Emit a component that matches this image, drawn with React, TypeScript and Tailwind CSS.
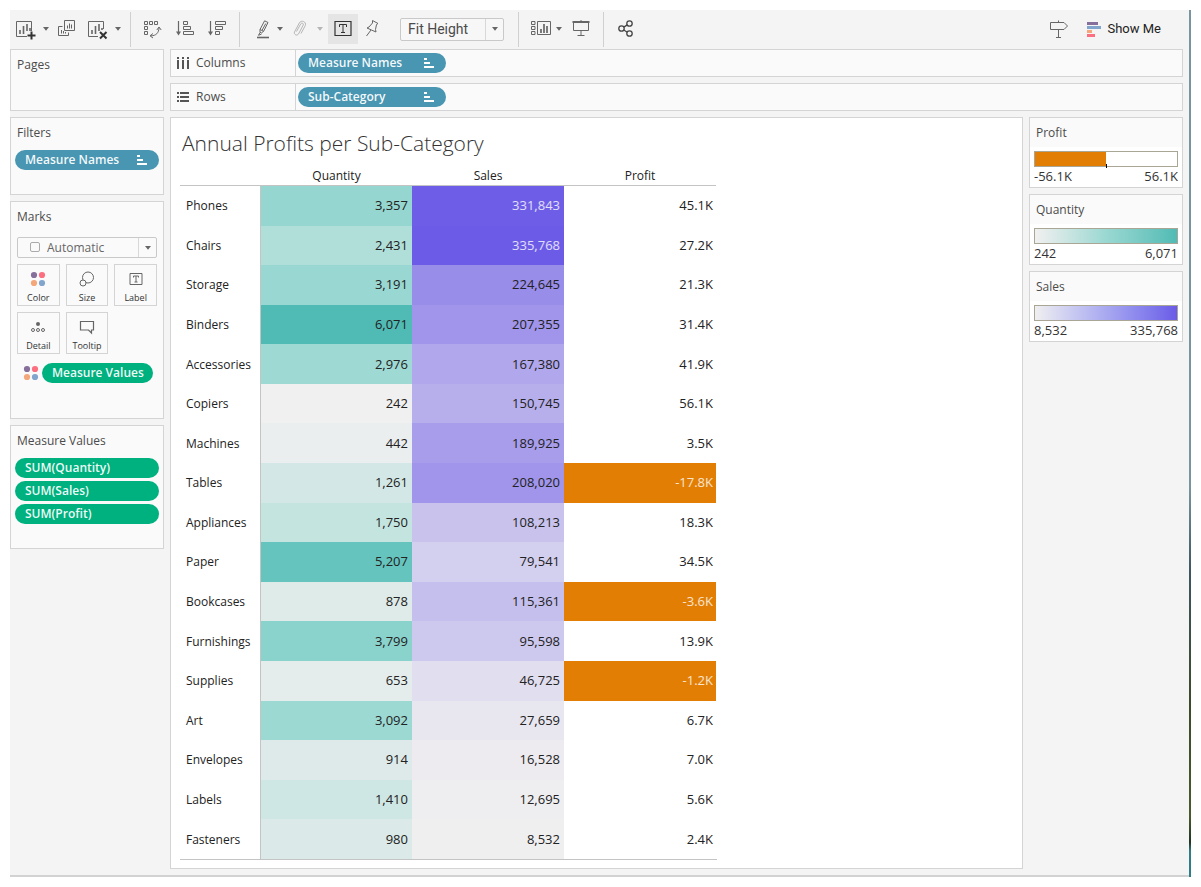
import type { ReactNode } from "react";
import clsx from "clsx";

interface Row {
    name: string;
    quantity: number;
    sales: number;
    profit: number;
}

const rows: Row[] = [
    { name: "Phones", quantity: 3357, sales: 331843, profit: 45.1 },
    { name: "Chairs", quantity: 2431, sales: 335768, profit: 27.2 },
    { name: "Storage", quantity: 3191, sales: 224645, profit: 21.3 },
    { name: "Binders", quantity: 6071, sales: 207355, profit: 31.4 },
    { name: "Accessories", quantity: 2976, sales: 167380, profit: 41.9 },
    { name: "Copiers", quantity: 242, sales: 150745, profit: 56.1 },
    { name: "Machines", quantity: 442, sales: 189925, profit: 3.5 },
    { name: "Tables", quantity: 1261, sales: 208020, profit: -17.8 },
    { name: "Appliances", quantity: 1750, sales: 108213, profit: 18.3 },
    { name: "Paper", quantity: 5207, sales: 79541, profit: 34.5 },
    { name: "Bookcases", quantity: 878, sales: 115361, profit: -3.6 },
    { name: "Furnishings", quantity: 3799, sales: 95598, profit: 13.9 },
    { name: "Supplies", quantity: 653, sales: 46725, profit: -1.2 },
    { name: "Art", quantity: 3092, sales: 27659, profit: 6.7 },
    { name: "Envelopes", quantity: 914, sales: 16528, profit: 7.0 },
    { name: "Labels", quantity: 1410, sales: 12695, profit: 5.6 },
    { name: "Fasteners", quantity: 980, sales: 8532, profit: 2.4 },
];

type Rgb = [number, number, number];

const quantityStops: Rgb[] = [[241, 240, 240], [154, 216, 210], [80, 187, 181]];
const salesStops: Rgb[] = [[240, 239, 240], [108, 91, 231]];

function scaleColor(value: number, min: number, max: number, stops: Rgb[]): string {
    const t = ((value - min) / (max - min)) * (stops.length - 1);
    const i = Math.min(Math.floor(t), stops.length - 2);
    const mix = stops[i].map((c, k) => Math.round(c + (stops[i + 1][k] - c) * (t - i)));
    return `rgb(${mix.join(", ")})`;
}

function Caret() {
    return (
        <svg viewBox="0 0 8 4" className="h-1 w-2 shrink-0" aria-hidden="true">
            <path d="M1 0h6L4 3.7z" fill="currentColor" />
        </svg>
    );
}

function ColorDots() {
    return (
        <svg viewBox="0 0 16 16" className="size-4 shrink-0" aria-hidden="true">
            <circle cx="4" cy="4" r="3.1" fill="#866f9b" />
            <circle cx="12" cy="4" r="3.1" fill="#fc6f80" />
            <circle cx="4" cy="12" r="3.1" fill="#f4a77b" />
            <circle cx="12" cy="12" r="3.1" fill="#82a5cd" />
        </svg>
    );
}

function ToolButton({ label, className, children }: Readonly<{ label: string; className?: string; children: ReactNode }>) {
    return (
        <button type="button" aria-label={label} className={clsx("flex h-[30px] shrink-0 items-center justify-center", className)}>
            {children}
        </button>
    );
}

function Icon({ small, children }: Readonly<{ small?: boolean; children: ReactNode }>) {
    return (
        <svg
            viewBox={small ? "0 0 16 20" : "0 0 20 20"}
            className={clsx("h-5 shrink-0 overflow-visible", small ? "w-4" : "w-5")}
            fill="none"
            stroke="currentColor"
            aria-hidden="true"
        >
            {children}
        </svg>
    );
}

function Separator({ className }: Readonly<{ className?: string }>) {
    return <div className={clsx("h-[35px] w-px shrink-0 bg-[#d0d0d0]", className)} />;
}

function Toolbar() {
    return (
        <header className="flex h-[39px] items-center pr-7 pb-px pl-[6px] text-[#666]">
            <ToolButton label="New Worksheet">
                <Icon>
                    <path d="M11 17.5H0.5v-15h15V12" />
                    <path d="M4 11v4M7.5 7v8M11 5v7M14 9v3" strokeWidth="1.6" />
                    <path d="M15.5 12.5v8M11.5 16.5h8" stroke="#333" strokeWidth="2" />
                </Icon>
            </ToolButton>
            <ToolButton label="New Worksheet options" className="ml-[6px]"><Caret /></ToolButton>
            <ToolButton label="Duplicate" className="ml-2">
                <Icon>
                    <path d="M6.5 1.5h10v10h-10zM4.5 7.5h-4v9h10v-3" />
                    <path d="M9.5 6.5v3M11.5 4.5v5M13.5 5.5v4M3.5 11v3.5M5.5 12v2.5M7.5 13v1.5" />
                </Icon>
            </ToolButton>
            <ToolButton label="Clear Sheet" className="ml-[10px]">
                <Icon>
                    <path d="M10 17.5H0.5v-15h15V10" />
                    <path d="M4 11v4M7.5 7v8M11 5v7" strokeWidth="1.6" />
                    <path d="M14 9v2" strokeWidth="1.6" />
                    <path d="M12 13l6.5 6.5M18.5 13L12 19.5" stroke="#333" strokeWidth="2" />
                </Icon>
            </ToolButton>
            <ToolButton label="Clear options" className="ml-[6px]"><Caret /></ToolButton>
            <Separator className="ml-2" />
            <ToolButton label="Swap Rows and Columns" className="ml-3">
                <Icon>
                    <path d="M1.5 2.5h3v3h-3zM6.5 2.5h3v3h-3zM11.5 2.5h3v3h-3zM1.5 7.5h3v3h-3zM1.5 12.5h3v3h-3z" />
                    <path d="M8 16.8c5 0 7.8-3 8-7.8" />
                    <path d="M13.8 11l2.2-3 2.2 3M10 14.5l-3 2.3 3 2.2" />
                </Icon>
            </ToolButton>
            <ToolButton label="Sort Ascending" className="ml-3">
                <Icon>
                    <path d="M3.5 2v12" strokeWidth="1.2" />
                    <path d="M1 12.5h5L3.5 16.5z" fill="currentColor" stroke="none" />
                    <path d="M8.5 2.5h4v3h-4zM8.5 7.5h7v3h-7zM8.5 12.5h10v3h-10z" />
                </Icon>
            </ToolButton>
            <ToolButton label="Sort Descending" className="ml-3">
                <Icon>
                    <path d="M3.5 2v12" strokeWidth="1.2" />
                    <path d="M1 12.5h5L3.5 16.5z" fill="currentColor" stroke="none" />
                    <path d="M8.5 2.5h10v3h-10zM8.5 7.5h7v3h-7zM8.5 12.5h4v3h-4z" />
                </Icon>
            </ToolButton>
            <Separator className="ml-3" />
            <ToolButton label="Highlight" className="ml-4">
                <Icon small>
                    <path d="M4 10.5L8.6 1.8l3.4 1.7-4.4 8.8zM4 10.5v2.8l1.3.7 2.3-1.7M4 13.5l-1.5 2.8 3-1.2M9.8 4.5l-3.6 6.5" />
                    <path d="M1 18.5h12" strokeWidth="1.6" />
                </Icon>
            </ToolButton>
            <ToolButton label="Highlight options" className="ml-1"><Caret /></ToolButton>
            <ToolButton label="Group Members" className="ml-2 text-[#b5b5b5]">
                <Icon small>
                    <path d="M4.5 12.5L8.8 4.8c1-1.5 3.2-.4 2.4 1.3L6.5 15c-1.4 2.2-5 .6-4-2L7.3 4c2-3.5 7.4-1.3 6 2.5L9 14.5" />
                </Icon>
            </ToolButton>
            <ToolButton label="Group options" className="ml-2 text-[#b5b5b5]"><Caret /></ToolButton>
            <ToolButton label="Show Mark Labels" className="ml-1 w-[30px] bg-[#e5e5e5] text-[#333]">
                <Icon>
                    <path d="M2 2.5h16v14H2z" strokeWidth="1.2" />
                    <path d="M6.5 8V5.5h7V8M10 5.5v8M8 13.5h4" />
                </Icon>
            </ToolButton>
            <ToolButton label="Fix Axes" className="ml-[6px]">
                <Icon small>
                    <path d="M8.5 1.5l5.5 3-1.5 1-1 5 .5 2.5-4.500-2-4.500-2 2-1 3.500-4zM7 11l-4.500 6" />
                </Icon>
            </ToolButton>
            <div className="relative ml-5 h-[23px] w-[104px] shrink-0 rounded-xs border border-[#c9c9c9] bg-[#f7f7f7]">
                <select aria-label="Fit" className="block h-full w-full appearance-none pl-[7px] font-['Roboto',sans-serif] text-sm leading-5 text-[#4b4b4b]">
                    <option>Fit Height</option>
                    <option>Fit Width</option>
                    <option>Entire View</option>
                </select>
                <span className="pointer-events-none absolute inset-y-0 right-0 flex w-[18px] items-center justify-center border-l border-[#d8d8d8]">
                    <Caret />
                </span>
            </div>
            <Separator className="ml-[14px]" />
            <ToolButton label="Show Cards" className="ml-3">
                <Icon>
                    <path d="M0.5 2.5H4v3H0.5zM0.5 7.5H4v3H0.5zM0.5 12.5H4v3H0.5zM6.5 2.5h13v13h-13z" />
                    <path d="M10 10v4M13 5v9M16 7v7" strokeWidth="1.7" />
                </Icon>
            </ToolButton>
            <ToolButton label="Cards options" className="ml-1"><Caret /></ToolButton>
            <ToolButton label="Presentation Mode" className="ml-2">
                <Icon>
                    <path d="M1.5 3h17" strokeWidth="2" />
                    <path d="M2.5 4v7.5h15V4M10 11.5v5M6.5 16.5h7M10 1v2" />
                </Icon>
            </ToolButton>
            <Separator className="ml-3" />
            <ToolButton label="Share" className="ml-3 text-[#444]">
                <Icon>
                    <circle cx="5.5" cy="9.5" r="2.7" strokeWidth="1.3" />
                    <circle cx="13.5" cy="4.5" r="2.7" strokeWidth="1.3" />
                    <circle cx="13.5" cy="14.5" r="2.7" strokeWidth="1.3" />
                    <path d="M7.8 8.1l3.5-2.2M7.8 11l3.5 2.2" strokeWidth="1.3" />
                </Icon>
            </ToolButton>
            <ToolButton label="Guide" className="ml-auto">
                <Icon>
                    <path d="M1.5 3.5H15l3.5 3.500-3.500 3.500H1.5zM9.5 1.5v2M9.5 10.5v8M7 18.5h5" />
                </Icon>
            </ToolButton>
            <button type="button" className="ml-[18px] flex shrink-0 items-center gap-[6px] font-['Roboto',sans-serif] text-[13px] leading-5 text-[#222]">
                <svg viewBox="0 0 14 16" className="h-4 w-3.5" aria-hidden="true">
                    <path d="M0 1h11v3H0z" fill="#866f9b" />
                    <path d="M0 5h14v3H0z" fill="#82a5cd" />
                    <path d="M0 9h5v3H0z" fill="#f4a77b" />
                    <path d="M0 13h8v3H0z" fill="#fc6f80" />
                </svg>
                Show Me
            </button>
        </header>
    );
}

function Pill({ label, green, sorted, className }: Readonly<{ label: string; green?: boolean; sorted?: boolean; className?: string }>) {
    return (
        <button
            type="button"
            className={clsx(
                "flex h-5 items-center justify-between rounded-full pl-[10px] text-xs leading-5 font-semibold whitespace-nowrap text-white/95",
                green ? "bg-[#00b180] pr-1" : "bg-[#4996b2] pr-3",
                className
            )}
        >
            {label}
            {sorted && (
                <svg viewBox="0 0 10 10" className="size-[10px]" aria-hidden="true">
                    <path d="M0 0h3v2H0zM0 4h6v2H0zM0 8h10v2H0z" fill="#fff" />
                </svg>
            )}
        </button>
    );
}

function Card({ title, className, children }: Readonly<{ title: string; className?: string; children?: ReactNode }>) {
    return (
        <section className={clsx("border border-[#d4d4d4] bg-[#fafafa] px-1", className)}>
            <h2 className="h-8 px-0.5 text-xs leading-[30px] text-[#4b4b4b]">{title}</h2>
            {children}
        </section>
    );
}

function MarkButton({ label, children }: Readonly<{ label: string; children: ReactNode }>) {
    return (
        <button
            type="button"
            className="flex h-[42px] flex-col items-center border border-[#d4d4d4] pt-[6px] text-[9px] leading-[22px] text-[#333]"
        >
            {children}
            {label}
        </button>
    );
}

function MarkIcon({ children }: Readonly<{ children: ReactNode }>) {
    return (
        <svg viewBox="0 0 16 16" className="size-4 shrink-0" fill="none" stroke="#666" aria-hidden="true">
            {children}
        </svg>
    );
}

function MarksCard() {
    return (
        <Card title="Marks" className="pb-[35px]">
            <div className="px-0.5 pt-[3px]">
                <div className="relative h-[21px] rounded-xs border border-[#c9c9c9]">
                    <span className="absolute top-1 left-3 size-[10px] rounded-xs border border-[#aaa]" />
                    <select aria-label="Mark type" className="block h-full w-full appearance-none pl-[29px] text-xs leading-4 text-[#666]">
                        <option>Automatic</option>
                        <option>Square</option>
                        <option>Text</option>
                    </select>
                    <span className="pointer-events-none absolute inset-y-0 right-0 flex w-[18px] items-center justify-center border-l border-[#d8d8d8] text-[#666]">
                        <Caret />
                    </span>
                </div>
                <div className="mt-[6px] grid grid-cols-3 gap-[6px]">
                    <MarkButton label="Color"><ColorDots /></MarkButton>
                    <MarkButton label="Size">
                        <MarkIcon>
                            <circle cx="9" cy="6.5" r="5.5" />
                            <circle cx="4" cy="12" r="3" fill="#fafafa" />
                        </MarkIcon>
                    </MarkButton>
                    <MarkButton label="Label">
                        <MarkIcon>
                            <path d="M2 2.5h12v11H2z" />
                            <path d="M5.5 6.5V5h5v1.5M8 5v6M6.5 11h3" />
                        </MarkIcon>
                    </MarkButton>
                    <MarkButton label="Detail">
                        <MarkIcon>
                            <circle cx="8" cy="5" r="2" fill="#666" stroke="none" />
                            <circle cx="3" cy="11" r="1.5" />
                            <circle cx="8" cy="11" r="1.5" />
                            <circle cx="13" cy="11" r="1.5" />
                        </MarkIcon>
                    </MarkButton>
                    <MarkButton label="Tooltip">
                        <MarkIcon>
                            <path d="M1.5 2.5h13V11h-2v3l-3-3h-8z" strokeWidth="1.2" />
                        </MarkIcon>
                    </MarkButton>
                </div>
                <div className="mt-[9px] flex items-center gap-[3px] pr-1 pl-[6px]">
                    <ColorDots />
                    <Pill label="Measure Values" green className="flex-1" />
                </div>
            </div>
        </Card>
    );
}

function Shelf({ name, pill, icon }: Readonly<{ name: string; pill: string; icon: ReactNode }>) {
    return (
        <section className="flex h-7 border border-[#d4d4d4] bg-[#fafafa]">
            <h2 className="flex w-[125px] shrink-0 items-center gap-[7px] border-r border-[#d4d4d4] pl-[6px] text-xs leading-4 text-[#4b4b4b]">
                <svg viewBox="0 0 12 12" className="size-3 text-[#555]" fill="currentColor" aria-hidden="true">{icon}</svg>
                {name}
            </h2>
            <div className="flex items-center px-0.5">
                <Pill label={pill} sorted className="w-[148px]" />
            </div>
        </section>
    );
}

function Legend({ title, min, max, children }: Readonly<{ title: string; min: string; max: string; children: ReactNode }>) {
    return (
        <section className="border border-[#d4d4d4] bg-white">
            <h2 className="h-[29px] bg-[#fafafa] pl-[6px] text-xs leading-[29px] text-[#4b4b4b]">{title}</h2>
            <div className="px-1 pt-1">
                {children}
                <div className="flex h-5 justify-between text-[13px] leading-[19px] text-[#333]">
                    <span>{min}</span>
                    <span>{max}</span>
                </div>
            </div>
        </section>
    );
}

function Sheet() {
    return (
        <main className="min-w-0 flex-1 border border-[#d4d4d4] bg-white px-[9px] pb-2">
            <h1 className="h-[49px] px-0.5 text-[21px] leading-[50px] font-light text-[#333]">Annual Profits per Sub-Category</h1>
            <table className="h-[692px] w-[536px] table-fixed border-separate border-spacing-0 text-[#222]">
                <thead>
                    <tr className="h-[19px] text-center text-xs leading-[18px]">
                        <td className="w-[81px] border-b border-[#c4c4c4]" />
                        <th scope="col" className="w-[151px] border-b border-[#c4c4c4] font-medium">Quantity</th>
                        <th scope="col" className="border-b border-[#c4c4c4] font-medium">Sales</th>
                        <th scope="col" className="border-b border-[#c4c4c4] font-medium">Profit</th>
                    </tr>
                </thead>
                <tbody className="text-right text-[13px] leading-5">
                    {rows.map((row) => (
                        <tr key={row.name}>
                            <th scope="row" className="border-r border-[#c4c4c4] pt-px pl-[6px] text-left text-xs leading-5 font-medium">
                                {row.name}
                            </th>
                            <td className="pr-1 pb-px" style={{ backgroundColor: scaleColor(row.quantity, 242, 6071, quantityStops) }}>
                                {row.quantity.toLocaleString("en-US")}
                            </td>
                            <td
                                className={clsx("pr-1 pb-px", row.sales > 300000 && "text-white/80")}
                                style={{ backgroundColor: scaleColor(row.sales, 8532, 335768, salesStops) }}
                            >
                                {row.sales.toLocaleString("en-US")}
                            </td>
                            <td className={clsx("pr-[3px] pb-px", row.profit < 0 && "bg-[#e17e03] text-white/80")}>
                                {row.profit.toFixed(1)}K
                            </td>
                        </tr>
                    ))}
                </tbody>
            </table>
            <div className="h-px w-[537px] bg-[#c4c4c4]" />
        </main>
    );
}

export default function App() {
    return (
        <div className="bg-white p-[10px] font-['Open_Sans',sans-serif]">
            <div className="flex">
                <div className="min-w-0 flex-1 border-b-2 border-[#d2d2d2] bg-[#f4f4f4]">
                    <Toolbar />
                    <div className="flex gap-[6px] pr-[6px] pb-[6px]">
                        <aside className="flex w-[154px] shrink-0 flex-col gap-[6px]">
                            <Card title="Pages" className="pb-7" />
                            <Card title="Filters" className="pb-6">
                                <Pill label="Measure Names" sorted className="w-full" />
                            </Card>
                            <MarksCard />
                            <Card title="Measure Values" className="pb-6">
                                <div className="flex flex-col gap-[3px]">
                                    <Pill label="SUM(Quantity)" green />
                                    <Pill label="SUM(Sales)" green />
                                    <Pill label="SUM(Profit)" green />
                                </div>
                            </Card>
                        </aside>
                        <div className="flex min-w-0 flex-1 flex-col gap-[6px]">
                            <Shelf name="Columns" pill="Measure Names" icon={<path d="M0 0h2v2H0zM0 3h2v9H0zM5 0h2v2H5zM5 3h2v9H5zM10 0h2v2h-2zM10 3h2v9h-2z" />} />
                            <Shelf name="Rows" pill="Sub-Category" icon={<path d="M0 1h2v2H0zM3 1h9v2H3zM0 5h2v2H0zM3 5h9v2H3zM0 9h2v2H0zM3 9h9v2H3z" />} />
                            <div className="flex gap-[6px]">
                                <Sheet />
                                <aside className="flex w-[154px] shrink-0 flex-col gap-[6px]">
                                    <Legend title="Profit" min="-56.1K" max="56.1K">
                                        <div className="relative h-4 border border-[#aaa695]">
                                            <div className="h-full w-1/2 bg-[#e17e03]" />
                                            <span className="absolute -bottom-0.5 left-1/2 h-1 w-px bg-black" />
                                        </div>
                                    </Legend>
                                    <Legend title="Quantity" min="242" max="6,071">
                                        <div className="h-4 border border-[#aaa695] bg-linear-to-r from-[#f1f0f0] via-[#9ad8d2] to-[#50bbb5]" />
                                    </Legend>
                                    <Legend title="Sales" min="8,532" max="335,768">
                                        <div className="h-4 border border-[#aaa695] bg-linear-to-r from-[#f0eff0] to-[#6c5be7]" />
                                    </Legend>
                                </aside>
                            </div>
                        </div>
                    </div>
                </div>
                <div className="w-0.5 shrink-0 bg-[linear-gradient(#78959f_55%,#3c5560_65%,#3d4a2a_80%,#4a5a2c_93%,#1f3524_96%,#2f7d86_97%)]" />
            </div>
        </div>
    );
}
